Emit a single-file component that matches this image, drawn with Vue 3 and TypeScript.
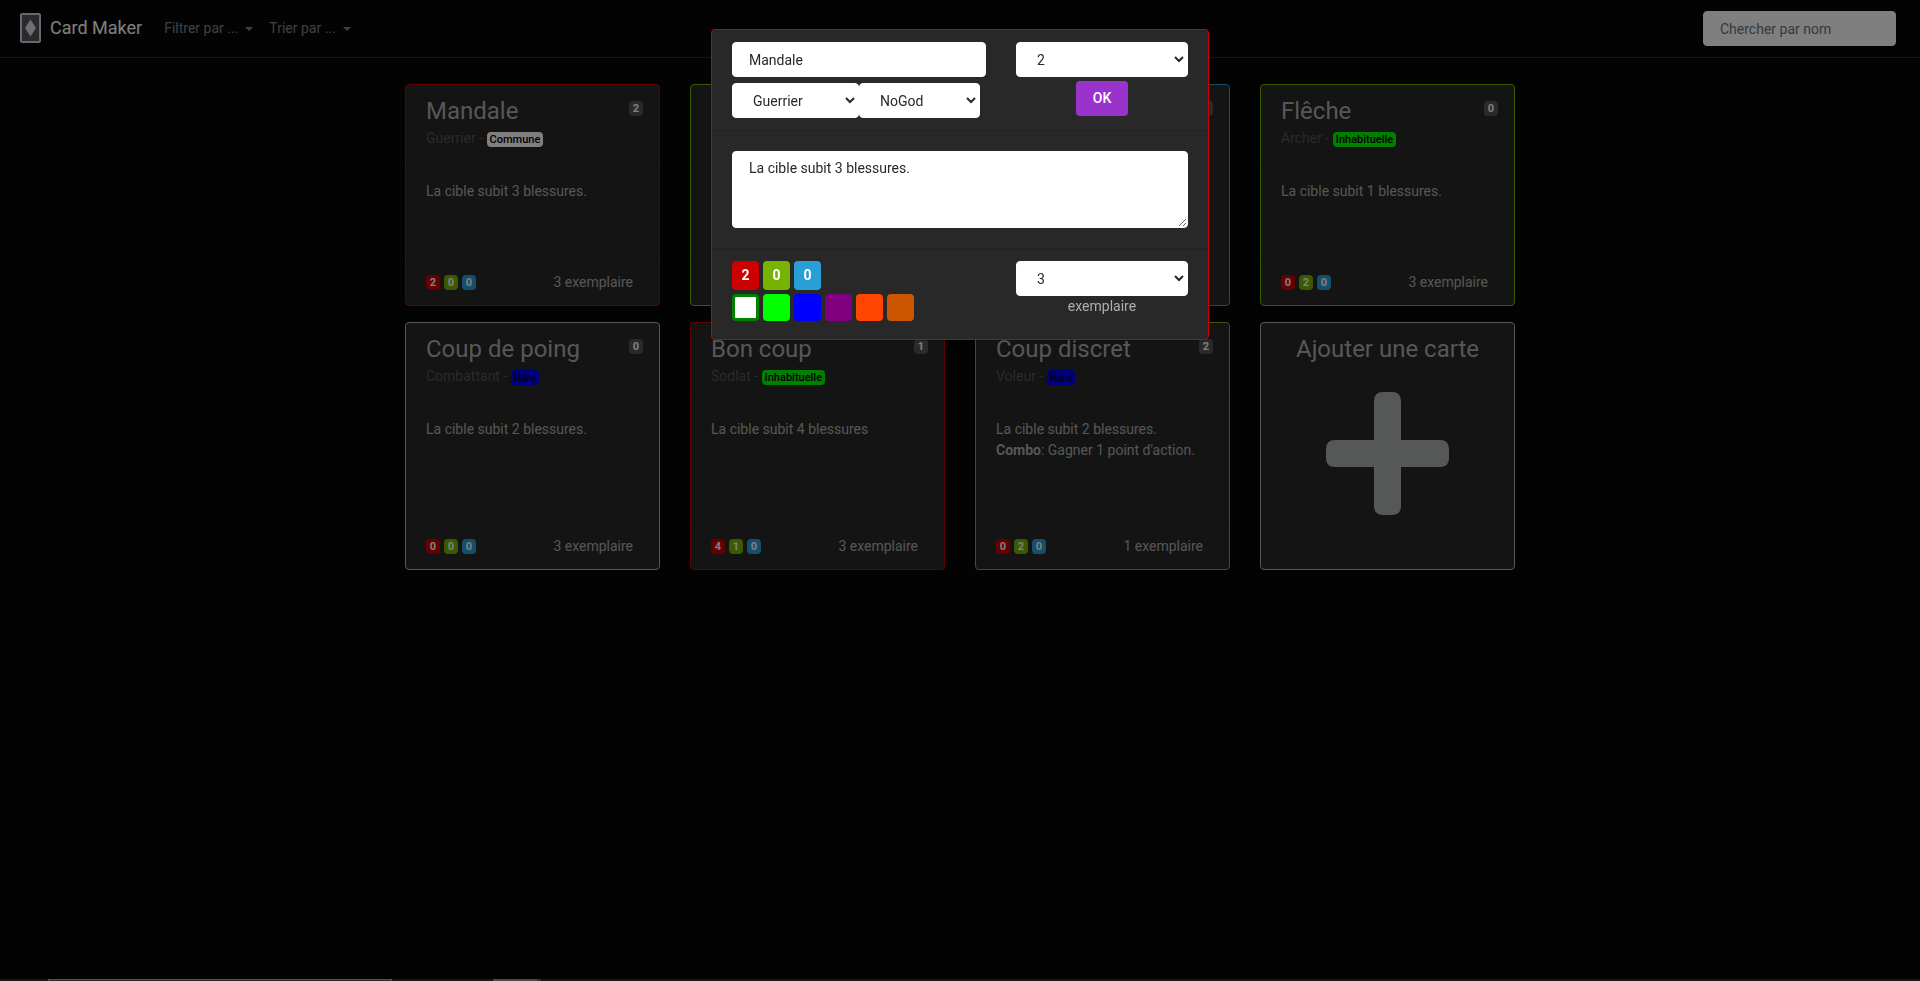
<script setup lang="ts">
import { reactive, ref } from 'vue'

type Tone = 'red' | 'green' | 'blue' | 'plain'
type Rarity = 'common' | 'uncommon' | 'rare'

interface Card {
  name?: string
  kind?: string
  rarity?: Rarity
  level?: number
  tone: Tone
  text?: string
  combo?: string
  costs?: [number, number, number]
  copies?: number
}

const rarityLabels: Record<Rarity, string> = {
  common: 'Commune',
  uncommon: 'Inhabituelle',
  rare: 'Rare',
}

const costTones = ['red', 'green', 'blue']

const cards: Card[] = [
  { name: 'Mandale', kind: 'Guerrier', rarity: 'common', level: 2, tone: 'red', text: 'La cible subit 3 blessures.', costs: [2, 0, 0], copies: 3 },
  { tone: 'green' },
  { tone: 'blue' },
  { name: 'Flêche', kind: 'Archer', rarity: 'uncommon', level: 0, tone: 'green', text: 'La cible subit 1 blessures.', costs: [0, 2, 0], copies: 3 },
  { name: 'Coup de poing', kind: 'Combattant', rarity: 'rare', level: 0, tone: 'plain', text: 'La cible subit 2 blessures.', costs: [0, 0, 0], copies: 3 },
  { name: 'Bon coup', kind: 'Sodlat', rarity: 'uncommon', level: 1, tone: 'red', text: 'La cible subit 4 blessures', costs: [4, 1, 0], copies: 3 },
  { name: 'Coup discret', kind: 'Voleur', rarity: 'rare', level: 2, tone: 'green', text: 'La cible subit 2 blessures.', combo: "Gagner 1 point d'action.", costs: [0, 2, 0], copies: 1 },
]

const swatches = ['white', 'lime', 'blue', 'purple', 'orange', 'bronze']

const search = ref('')
const form = reactive({
  name: 'Mandale',
  level: '2',
  kind: 'Guerrier',
  god: 'NoGod',
  text: 'La cible subit 3 blessures.',
  costs: [2, 0, 0],
  swatch: 'white',
  copies: '3',
})
</script>

<template>
  <div class="page">
    <header class="navbar">
      <a class="brand" href="#">
        <svg class="logo" viewBox="0 0 21 30" aria-hidden="true">
          <rect x="1" y="1" width="19" height="28" rx="1" fill="#53535f" stroke="#d2d2d2" stroke-width="2" />
          <path d="M10.5 6.500 16 15l-5.500 8.500L5 15z" fill="#dedede" />
        </svg>
        Card Maker
      </a>
      <nav class="menu">
        <button type="button" class="menu-link">Filtrer par ...<span class="caret"></span></button>
        <button type="button" class="menu-link">Trier par ...<span class="caret"></span></button>
      </nav>
      <input v-model="search" class="field search" type="search" placeholder="Chercher par nom" aria-label="Chercher par nom" />
    </header>

    <main class="deck">
      <article v-for="(card, i) in cards" :key="i" class="card" :class="'tone-' + card.tone">
        <div class="card-head">
          <div>
            <h2 class="title">{{ card.name }}</h2>
            <p class="subtitle">
              <template v-if="card.rarity">{{ card.kind }} - <span class="badge rarity" :class="card.rarity">{{ rarityLabels[card.rarity] }}</span></template>
            </p>
          </div>
          <span class="badge level">{{ card.level }}</span>
        </div>
        <div class="card-body">
          {{ card.text }}
          <div v-if="card.combo"><b>Combo</b>: {{ card.combo }}</div>
        </div>
        <div class="card-foot">
          <div class="costs">
            <span v-for="(cost, c) in card.costs" :key="c" class="badge" :class="'bg-' + costTones[c]">{{ cost }}</span>
          </div>
          <span v-if="card.copies">{{ card.copies }} exemplaire</span>
        </div>
      </article>

      <button type="button" class="card tone-plain add">
        <span class="add-head title">Ajouter une carte</span>
        <span class="add-body">
          <svg viewBox="0 0 123 123" class="plus" aria-hidden="true">
            <path d="M57 0h9q9 0 9 9v39h39q9 0 9 9v9q0 9-9 9H75v39q0 9-9 9h-9q-9 0-9-9V75H9q-9 0-9-9v-9q0-9 9-9h39V9q0-9 9-9z" />
          </svg>
        </span>
        <span class="card-foot"></span>
      </button>
    </main>

    <div class="taskbar" aria-hidden="true"><i class="task-search"></i><i class="task-app"></i><i class="task-edge"></i></div>

    <div class="backdrop">
      <form class="modal" role="dialog" aria-modal="true" aria-label="Mandale" @submit.prevent>
        <div class="split modal-head">
          <div>
            <input v-model="form.name" class="field" type="text" aria-label="Nom" />
            <div class="pair">
              <select v-model="form.kind" class="field kind" aria-label="Classe"><option>Guerrier</option></select>
              <select v-model="form.god" class="field god" aria-label="Dieu"><option>NoGod</option></select>
            </div>
          </div>
          <div class="side">
            <select v-model="form.level" class="field" aria-label="Niveau"><option>2</option></select>
            <button type="submit" class="ok">OK</button>
          </div>
        </div>
        <div class="modal-body">
          <textarea v-model="form.text" class="field text" rows="3" aria-label="Texte"></textarea>
        </div>
        <div class="split modal-foot">
          <div>
            <div class="chips">
              <button v-for="(cost, c) in form.costs" :key="c" type="button" class="chip" :class="'bg-' + costTones[c]">{{ cost }}</button>
            </div>
            <div class="chips">
              <input v-for="s in swatches" :key="s" v-model="form.swatch" type="radio" name="swatch" :value="s" :aria-label="s" class="swatch" :class="'swatch-' + s" />
            </div>
          </div>
          <div class="side">
            <select id="copies" v-model="form.copies" class="field"><option>3</option></select>
            <label for="copies">exemplaire</label>
          </div>
        </div>
      </form>
    </div>
  </div>
</template>

<style>
body {
  margin: 0;
  background: #060606;
}
</style>

<style scoped>
* {
  box-sizing: border-box;
}
.page {
  min-height: 100vh;
  color: #adafae;
  font: 14px/21px Roboto, "Liberation Sans", sans-serif;
}
button,
input,
select,
textarea {
  margin: 0;
  font: inherit;
}
.navbar {
  display: flex;
  align-items: center;
  padding: 11px 24px 11px 20px;
  border-bottom: 1px solid #282828;
}
.brand {
  display: flex;
  align-items: center;
  gap: 9px;
  margin-bottom: 2px;
  color: #fff;
  font-size: 18px;
  text-decoration: none;
}
.logo {
  width: 21px;
  height: 30px;
}
.menu {
  display: flex;
  gap: 16px;
  margin: 0 auto 0 22px;
}
.menu-link {
  display: flex;
  align-items: center;
  gap: 7px;
  padding: 0;
  border: 0;
  background: none;
  color: rgba(255, 255, 255, 0.5);
}
.caret {
  border: 4px solid transparent;
  border-top-color: currentColor;
  border-bottom: 0;
}
.field {
  display: block;
  width: 100%;
  height: 35px;
  padding: 6px 16px;
  border: 1px solid #fff;
  border-radius: 4px;
  background-color: #fff;
  color: #282828;
}
.field::placeholder {
  color: #707070;
  opacity: 1;
}
.search {
  width: 193px;
}
.deck {
  display: grid;
  grid-template-columns: repeat(4, 1fr);
  gap: 16px 30px;
  max-width: 1110px;
  margin: 26px auto 0;
}
.card {
  display: flex;
  flex-direction: column;
  border: 1px solid;
  border-radius: 4px;
  background: #282828;
}
.tone-red {
  border-color: #c00;
}
.tone-green {
  border-color: #77b300;
}
.tone-blue {
  border-color: #2a9fd6;
}
.tone-plain {
  border-color: #adafae;
}
.card-head {
  display: flex;
  justify-content: space-between;
  align-items: flex-start;
  padding: 12px 16px 11px 20px;
  border-bottom: 1px solid rgba(0, 0, 0, 0.125);
}
.title {
  min-height: 29px;
  margin: 0 0 2px;
  font-size: 24px;
  font-weight: 400;
  line-height: 29px;
}
.subtitle {
  min-height: 21px;
  margin: 0;
  color: #555;
}
.badge {
  display: inline-block;
  min-width: 14px;
  height: 15px;
  padding: 0 3px;
  border-radius: 4px;
  color: #fff;
  font-size: 11px;
  font-weight: 700;
  line-height: 15px;
  text-align: center;
}
.level {
  margin-top: 4px;
  background: #555;
}
.rarity {
  color: #000;
  font-weight: 500;
}
.common {
  background: #fff;
}
.uncommon {
  background: #0f0;
}
.rare {
  background: #00f;
}
.bg-red {
  background: #c00;
}
.bg-green {
  background: #77b300;
}
.bg-blue {
  background: #2a9fd6;
}
.card-body {
  flex: 1;
  min-height: 98px;
  padding: 20px;
}
.card-foot {
  display: flex;
  justify-content: space-between;
  align-items: center;
  min-height: 46px;
  padding: 0 26px 0 20px;
  border-top: 1px solid rgba(0, 0, 0, 0.125);
}
.costs {
  display: flex;
  gap: 4px;
}
.add {
  padding: 0;
  color: inherit;
}
.add-head {
  margin: 0;
  padding: 12px 20px 18px;
  border-bottom: 1px solid rgba(0, 0, 0, 0.125);
}
.add-body {
  display: flex;
  flex: 1;
  align-items: center;
  justify-content: center;
  min-height: 140px;
}
.plus {
  width: 123px;
  fill: #adafae;
}
.taskbar {
  position: fixed;
  inset: auto 0 0;
  display: flex;
  height: 2px;
  background: #352c30;
}
.task-search {
  width: 344px;
  margin: 0 101px 0 48px;
  border: 1px solid #aaa;
  border-bottom: 0;
  background: #555;
}
.task-app {
  width: 44px;
  background: #949494;
}
.task-edge {
  width: 4px;
  background: #606060;
}
.backdrop {
  position: fixed;
  inset: 0;
  padding: 29px 16px;
  background: rgba(0, 0, 0, 0.5);
}
.modal {
  max-width: 498px;
  margin: 0 auto;
  border: 1px solid #c00;
  border-radius: 4px;
  background: #282828;
  box-shadow: 0 0 0 1px rgba(0, 0, 0, 0.2);
}
.split {
  display: grid;
  grid-template-columns: 254fr 172fr;
  gap: 30px;
  padding: 12px 20px;
}
.modal-body {
  padding: 20px;
  border: solid rgba(0, 0, 0, 0.125);
  border-width: 1px 0;
}
.pair {
  display: flex;
  margin-top: 6px;
}
.kind {
  width: 127px;
}
.god {
  width: 121px;
}
.side {
  display: flex;
  flex-direction: column;
  align-items: center;
}
.ok {
  height: 35px;
  margin-top: 4px;
  padding: 0 17px;
  border: 0;
  border-radius: 4px;
  background: #93c;
  color: #fff;
  font-weight: 500;
}
.text {
  height: 77px;
  resize: vertical;
}
.modal-foot {
  padding-bottom: 14px;
}
.chips {
  display: flex;
  gap: 4px;
  margin-bottom: 4px;
}
.chip,
.swatch {
  width: 27px;
  height: 29px;
  padding: 0;
  border: 0;
  border-radius: 4px;
  color: #fff;
  font-weight: 700;
}
.swatch {
  height: 27px;
  appearance: none;
}
.swatch:checked {
  border: 3px solid #008000;
}
.swatch-white {
  background: #fff;
}
.swatch-lime {
  background: #0f0;
}
.swatch-blue {
  background: #00f;
}
.swatch-purple {
  background: #800080;
}
.swatch-orange {
  background: #ff4500;
}
.swatch-bronze {
  background: #c50;
}
</style>
